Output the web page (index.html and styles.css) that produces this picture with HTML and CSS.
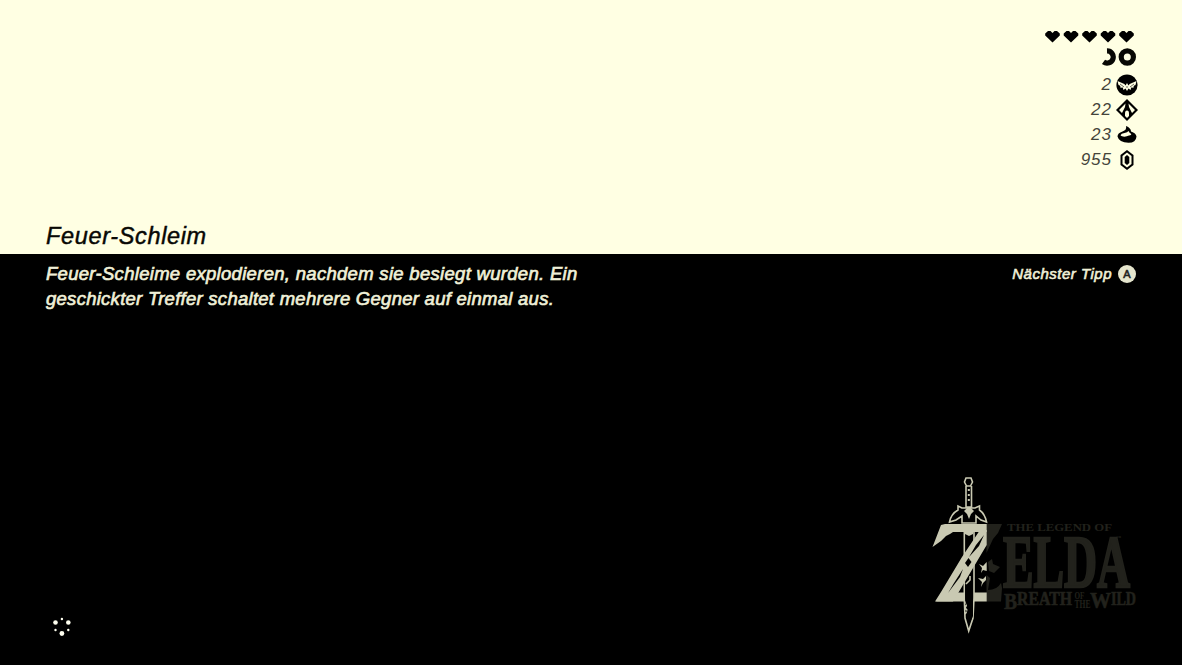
FILE: index.html
```html
<!DOCTYPE html>
<html lang="de">
<head>
<meta charset="utf-8">
<title>Feuer-Schleim</title>
<link rel="stylesheet" href="styles.css">
</head>
<body>
<header class="top">
  <h1 class="title">Feuer-Schleim</h1>
  <div class="status">
    <svg class="hearts" viewBox="0 0 90 14">
      <defs><path id="heart" d="M3 2H5.500L7.500 4L9.500 2H12L14.800 4.500V6.500L7.500 13.500L.2 6.500V4.500Z"/></defs>
      <use href="#heart"/><use href="#heart" x="18.500"/><use href="#heart" x="37"/><use href="#heart" x="55.500"/><use href="#heart" x="74"/>
    </svg>
    <svg class="stamina" viewBox="0 0 36 18">
      <path d="M6 2.900A6.100 6.100 0 1 1 2.500 13.900" class="ring"/>
      <circle cx="26.300" cy="9" r="6.100" class="ring"/>
    </svg>
    <div class="row"><span class="num">2</span>
      <svg class="icon" viewBox="0 0 22 22"><circle cx="11" cy="11" r="10.600"/><path class="cut" d="M1.500 7L8.300 10L9.600 11.500L11 9L12.400 11.500L13.700 10L20.500 7L19.500 11L17.800 11.800L17.500 13.800L15.300 13.500L14.500 16L12.500 14.500L11 17L9.500 14.500L7.500 16L6.700 13.500L4.500 13.800L4.200 11.800L2.500 11Z"/><path class="cut-line" d="M4 10L8 13M18 10L14 13M11 12V14"/></svg>
    </div>
    <div class="row"><span class="num">22</span>
      <svg class="icon" viewBox="0 0 22 22"><path d="M11 0L22 11L11 22L0 11Z"/><path class="cut" d="M9.500 4.500L3 11L6 14L9 8ZM12.500 4.500L19 11L16 14L13 8Z"/><path class="cut" d="M11 11.500Q13 11.500 13 14.500V17L11 19L9 17V14.500Q9 11.500 11 11.500Z"/></svg>
    </div>
    <div class="row"><span class="num">23</span>
      <svg class="icon" viewBox="0 0 22 22"><path d="M10 2Q15 4 15 7.500Q20 9 20.500 12.500Q20 18.800 12.500 18.800Q3 18.500 1.500 12.500Q1.500 9 6.500 7.500Q11 6 10 2Z"/><path class="cut" d="M4.500 11.300Q5 9.500 8.500 9Q11.500 8.500 12.500 7Q13.500 9 15 9.800Q16 11 13 11.500Q10 13 7 12.500Q5 12.300 4.500 11.300Z"/></svg>
    </div>
    <div class="row"><span class="num">955</span>
      <svg class="icon" viewBox="0 0 22 22"><path d="M11 1L17.500 6V16L11 21L4.500 16V6Z"/><path class="cut" d="M11 3.500L15.500 7V15L11 18.500L6.500 15V7Z"/><path d="M11 6L13.300 8V14L11 16L8.700 14V8Z"/></svg>
    </div>
  </div>
</header>
<main class="bottom">
  <div class="tip">
    <p class="text"><span class="line first">Feuer-Schleime explodieren, nachdem sie besiegt wurden. Ein</span><span class="line second">geschickter Treffer schaltet mehrere Gegner auf einmal aus.</span></p>
    <div class="next"><span class="next-label">Nächster Tipp</span><span class="button">A</span></div>
  </div>
  <div class="foot">
    <svg class="loader" viewBox="0 0 24 24"><circle cx="5.500" cy="7.500" r="2.300"/><circle cx="18.300" cy="7.500" r="2.300"/><circle cx="11.900" cy="18.500" r="2.400"/><circle cx="11.900" cy="4" r="1.200"/><circle cx="5.500" cy="15" r="1.200"/><circle cx="18.300" cy="15" r="1.200"/></svg>
    <svg class="logo" viewBox="926 472 216 164">
      <g class="dim">
        <path d="M986.500 524H1002L998 533L993 539L986.500 553ZM986.500 601.500V575L990 578L988 590Q997 590 1001 583L1002 588L1001 601.500ZM988 562L992 559L993 564L1000 567L994 573L989 571Z"/>
        <text x="1007" y="531" font-size="9.500" textLength="105" lengthAdjust="spacingAndGlyphs">THE LEGEND OF</text>
        <text class="heavy" x="1003" y="587" font-size="74" textLength="127" lengthAdjust="spacingAndGlyphs">ELDA</text>
        <text x="1116" y="539" font-size="5">™</text>
        <text class="bold" x="1004" y="609" font-size="23" textLength="13" lengthAdjust="spacingAndGlyphs">B</text>
        <text class="bold" x="1017" y="605" font-size="18" textLength="55" lengthAdjust="spacingAndGlyphs">REATH</text>
        <text x="1074.500" y="599" font-size="11" textLength="10" lengthAdjust="spacingAndGlyphs">OF</text>
        <text x="1074.500" y="608" font-size="12" textLength="16" lengthAdjust="spacingAndGlyphs">THE</text>
        <text class="bold" x="1090" y="608" font-size="23" textLength="21" lengthAdjust="spacingAndGlyphs">W</text>
        <text class="bold" x="1111" y="605" font-size="18" textLength="25" lengthAdjust="spacingAndGlyphs">ILD</text>
      </g>
      <path class="lit" d="M941 525L945 524H986.700V532H953L950 534L946 536L941 541L932.500 547L936 538ZM936 601.500L944 592.500H986.700V601.500Z"/>
      <path class="dark" d="M964 532H974V596L973 617L968.700 630L965 617L964 598Z"/>
      <path class="edge" d="M964.300 532V598L965 618L968.700 631L973 618L974 598V532M966 584L970 580V576M964.500 601L967 604L965 608L968 611L965 614"/>
      <path class="lit" d="M980 530H986.700V545L960 590L953 601.500H935L941 592L962 557Z"/>
      <path class="dark" d="M984 535L979 546L969 557L976 545ZM963 569L960 577L948 593L954 583ZM968.500 558L971.500 562L968 567L965 563ZM965 585L970 587L973 584V616L969 625L966 616L968 608L965.500 602Z"/>
      <path class="edge" d="M966 478H971L972.500 482L970.500 486H966.500L964.500 482ZM966 486V507H971.500V486M962 508L958 506V510Q951 514 949.500 522L956 520L962 516V523H976V516L981 520L986.500 522Q985 514 979.500 510V506L975 508Z"/>
      <path class="lit" d="M967 508H971L974 511L971 514L969 519L967 514L964 511ZM967.800 489H969.800V491H967.800ZM967.800 494H969.800V496H967.800ZM967.800 499H969.800V501H967.800ZM964 530L967 531L969 528L971 531L974 530L973 534L969 536L965 534ZM979 564L983 566L986.700 562V571L983 570L981 573L982 568ZM978 578L983 579L986 576V580L983 583L981 587L982 582Z"/>
    </svg>
  </div>
</main>
</body>
</html>
```
FILE: styles.css
```css
* { box-sizing: border-box; }
body { margin: 0; width: 1182px; height: 665px; display: flex; flex-direction: column; background: #000; color: #f0f0d8; font-family: "Liberation Sans", sans-serif; font-style: italic; overflow: hidden; }
.top { height: 254px; padding: 29px 44px 0 46px; display: flex; justify-content: space-between; background: #ffffe3; color: #080804; }
.title { margin: 0; align-self: flex-end; font-size: 23.5px; line-height: 36px; font-weight: 400; letter-spacing: .65px; -webkit-text-stroke: .45px; }
.status { display: flex; flex-direction: column; align-items: flex-end; }
.hearts { width: 90px; height: 14px; margin-right: 3px; }
.stamina { width: 36px; height: 18px; margin: 5px 1px 6px 0; }
.ring { fill: none; stroke: #080804; stroke-width: 5.2; }
.row { display: flex; align-items: center; gap: 4px; height: 25px; }
.icon { width: 22px; height: 22px; }
.cut { fill: #ffffe3; }
.cut-line { fill: none; stroke: #080804; stroke-width: .6; }
.num { font-size: 17px; letter-spacing: 1px; padding-top: 1px; color: #44443a; }
.bottom { flex: 1; display: flex; flex-direction: column; justify-content: space-between; padding: 7px 46px 29px; }
.tip { display: flex; justify-content: space-between; align-items: flex-start; }
.text { margin: 0; font-size: 18.5px; line-height: 25px; -webkit-text-stroke: .65px; }
.line { display: block; white-space: nowrap; }
.first { letter-spacing: .3px; }
.second { letter-spacing: .27px; }
.next { display: flex; align-items: center; gap: 6px; height: 26px; font-size: 15px; letter-spacing: .5px; -webkit-text-stroke: .6px; }
.next-label { margin-top: -1px; }
.button { width: 18px; height: 18px; border-radius: 50%; background: #e5e5cd; color: #222; font-size: 11px; line-height: 18px; text-align: center; font-style: normal; letter-spacing: 0; }
.foot { display: flex; justify-content: space-between; align-items: flex-end; }
.loader { width: 24px; height: 24px; margin: 0 0 -3px 4px; fill: #fffff0; }
.logo { width: 216px; height: 164px; margin-right: -6px; }
.dim { fill: #22221c; font-family: "Liberation Serif", serif; font-weight: 700; font-style: normal; }
.heavy { stroke: #22221c; stroke-width: 2.6; }
.bold { stroke: #22221c; stroke-width: .6; }
.lit { fill: #c9c9b2; }
.dark { fill: #000; }
.edge { fill: none; stroke: #c9c9b2; stroke-width: 1.6; }
```
